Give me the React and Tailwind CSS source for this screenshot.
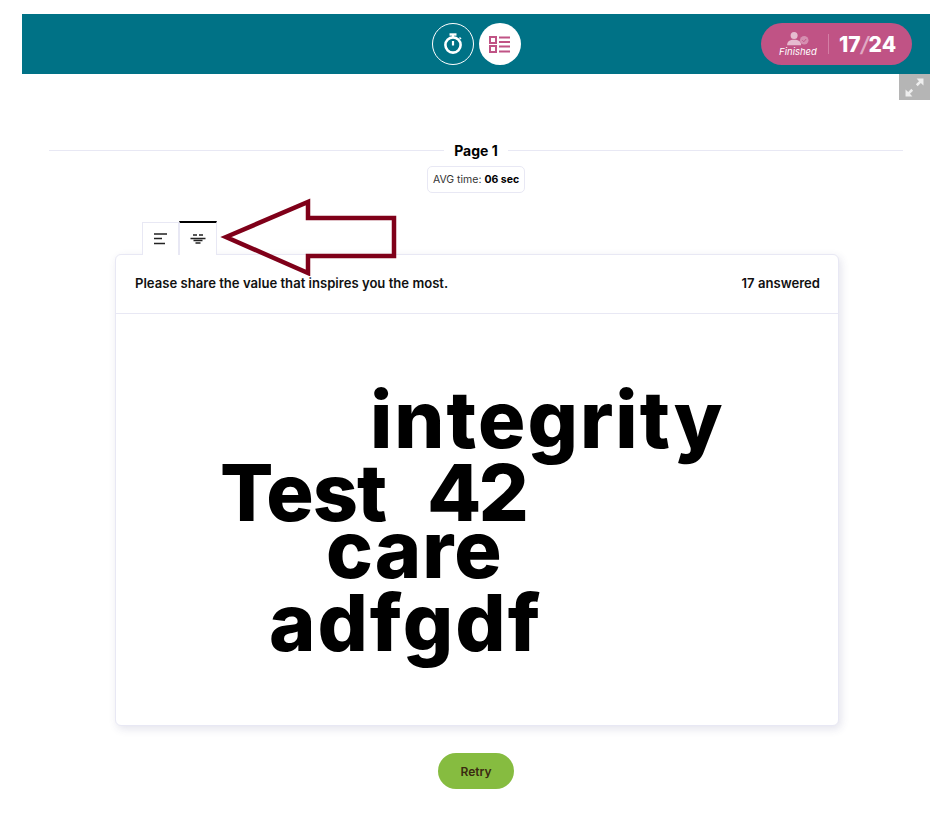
import React from 'react';

const font = { fontFamily: '"Inter", "Liberation Sans", sans-serif' };

const TimerIcon = () => (
  <svg width="20" height="22" viewBox="0 0 20 22" fill="none" stroke="white">
    <path d="M6.500 1.500h7" strokeWidth="2.400" />
    <path d="M10 2v2" strokeWidth="2" />
    <circle cx="10" cy="12" r="7.600" strokeWidth="2.600" />
    <path d="M10 8v4.500" strokeWidth="2.200" />
    <path d="M16.500 4.500l1.500 1.500" strokeWidth="1.500" />
  </svg>
);

const ListIcon = () => (
  <svg width="22" height="17" viewBox="0 0 22 17" fill="none" stroke="#c05385">
    <rect x="1" y="1" width="6" height="6" strokeWidth="2" />
    <rect x="1" y="10" width="6" height="6" strokeWidth="2" />
    <path d="M10 1.500h11M10 6h11M10 10.500h11M10 15.500h11" strokeWidth="2" />
  </svg>
);

const PersonIcon = () => (
  <svg width="22" height="14" viewBox="0 0 28 18">
    <circle cx="9" cy="4.500" r="4.500" fill="#e6bcd0" />
    <path d="M0 17c0-5 3.500-7 9-7s9 2 9 7z" fill="#e6bcd0" />
    <circle cx="22" cy="10.500" r="5.500" fill="#d58fb0" />
    <path d="M19.500 10.500l2 2 3-3.500" fill="none" stroke="#c05385" strokeWidth="1.200" />
  </svg>
);

const ExpandIcon = () => (
  <svg width="19" height="19" viewBox="0 0 18 18" fill="#eeeeee">
    <path d="M11 0.500h6.500V7L15 4.700 12 7.700 10.300 6l3-3z" />
    <path d="M7 17.500H0.500V11L3 13.300 6 10.300 7.700 12l-3 3z" />
  </svg>
);

const LeftAlignIcon = () => (
  <svg width="14" height="12" viewBox="0 0 14 12" stroke="#222" strokeWidth="1.700">
    <path d="M0 1h13M0 5.500h8M0 10.500h11" />
  </svg>
);

const CloudIcon = () => (
  <svg width="16" height="10" viewBox="0 0 16 10" stroke="#222" strokeWidth="1.500">
    <path d="M3 1h4M9 1h4M0.500 4.500h15M3.500 6.500h9M5.500 9h5" />
  </svg>
);

const words = [
  { text: 'integrity', cls: 'left-[254px] top-[66px] tracking-[2px]' },
  { text: 'Test', cls: 'left-[104px] top-[139px] tracking-[-1px]' },
  { text: '42', cls: 'left-[311px] top-[139px] tracking-[-3px]' },
  { text: 'care', cls: 'left-[210px] top-[196px] tracking-[1px]' },
  { text: 'adfgdf', cls: 'left-[153px] top-[269px] tracking-[2px]' },
];

export default function App() {
  return (
    <div className="relative min-h-[829px] bg-white pt-[14px]" style={font}>
      <header className="ml-[22px] mr-[5px] h-[60px] bg-[#007286] flex items-center justify-center relative">
        <div className="flex items-center gap-[5px] ml-[1px]">
          <button className="w-[42px] h-[42px] rounded-full border border-white flex items-center justify-center">
            <TimerIcon />
          </button>
          <button className="w-[42px] h-[42px] rounded-full bg-white flex items-center justify-center">
            <ListIcon />
          </button>
        </div>
        <div className="absolute right-[18px] top-[9px] w-[151px] h-[42px] rounded-full bg-[#c05385] flex items-center pl-[17px]">
          <div className="w-[40px] flex flex-col items-center">
            <PersonIcon />
            <span className="text-[9.500px] italic text-white leading-[11px]">Finished</span>
          </div>
          <div className="w-px h-[20px] bg-[#d47ea5] ml-[10px]" />
          <div className="ml-[10px] text-[21px] font-extrabold text-white leading-none">
            17<span className="text-[#e0a9c3] font-semibold italic">/</span>24
          </div>
        </div>
      </header>

      <div className="flex justify-end mr-[5px]">
        <button className="w-[31px] h-[26px] bg-[#b5b5b5] flex items-center justify-center">
          <ExpandIcon />
        </button>
      </div>

      <div className="mt-[41px] ml-[49px] mr-[32px] flex items-center gap-[10px]">
        <div className="flex-1 h-px bg-[#e8e8f4] mt-[-2px]" />
        <h2 className="text-[14px] font-bold text-black leading-[20px]">Page 1</h2>
        <div className="flex-1 h-px bg-[#e8e8f4] mt-[-2px]" />
      </div>

      <div className="flex justify-center mt-[5px] ml-[17px]">
        <div className="h-[27px] w-[98px] border border-[#e8e8f4] rounded-[5px] flex items-center justify-center text-[10.500px] text-[#333] whitespace-nowrap">
          AVG time:&nbsp;<b className="text-black">06 sec</b>
        </div>
      </div>

      <div className="ml-[115px] mr-[96px] mt-[28px]">
        <div className="flex pl-[27px] relative z-10 mb-[-1px]">
          <button className="w-[37px] h-[33px] mt-[1px] border border-[#e8e8f4] border-b-0 flex items-center justify-center bg-white">
            <LeftAlignIcon />
          </button>
          <button className="w-[38px] h-[34px] border-t-2 border-t-black border-x border-x-[#e8e8f4] flex items-center justify-center bg-white">
            <CloudIcon />
          </button>
        </div>

        <div className="h-[472px] border border-[#e8e8f4] rounded-[6px] bg-white shadow-[2px_3px_8px_rgba(60,60,120,0.14)] flex flex-col">
          <div className="h-[59px] border-b border-[#e8e8f4] flex items-center justify-between pl-[19px] pr-[18px] text-[13.100px] font-semibold text-[#111]">
            <span>Please share the value that inspires you the most.</span>
            <span>17 answered</span>
          </div>
          <div className="relative flex-1 text-[79px] font-extrabold text-black leading-none">
            {words.map((w) => (
              <span key={w.text} className={`absolute ${w.cls}`}>{w.text}</span>
            ))}
          </div>
        </div>
      </div>

      <div className="flex justify-center mt-[27px] ml-[17px]">
        <button className="w-[76px] h-[36px] rounded-full bg-[#86bc40] text-[#3a2a10] text-[12px] font-semibold pt-[1px]">
          Retry
        </button>
      </div>

      {/* annotation arrow drawn over the tabs */}
      <svg className="absolute left-[220px] top-[198px]" width="178" height="78" viewBox="0 0 178 78" fill="none">
        <path d="M6 39 L88 4 V20 H174 V58 H88 V75 Z" stroke="#7f0019" strokeWidth="4.500" />
      </svg>
    </div>
  );
}
